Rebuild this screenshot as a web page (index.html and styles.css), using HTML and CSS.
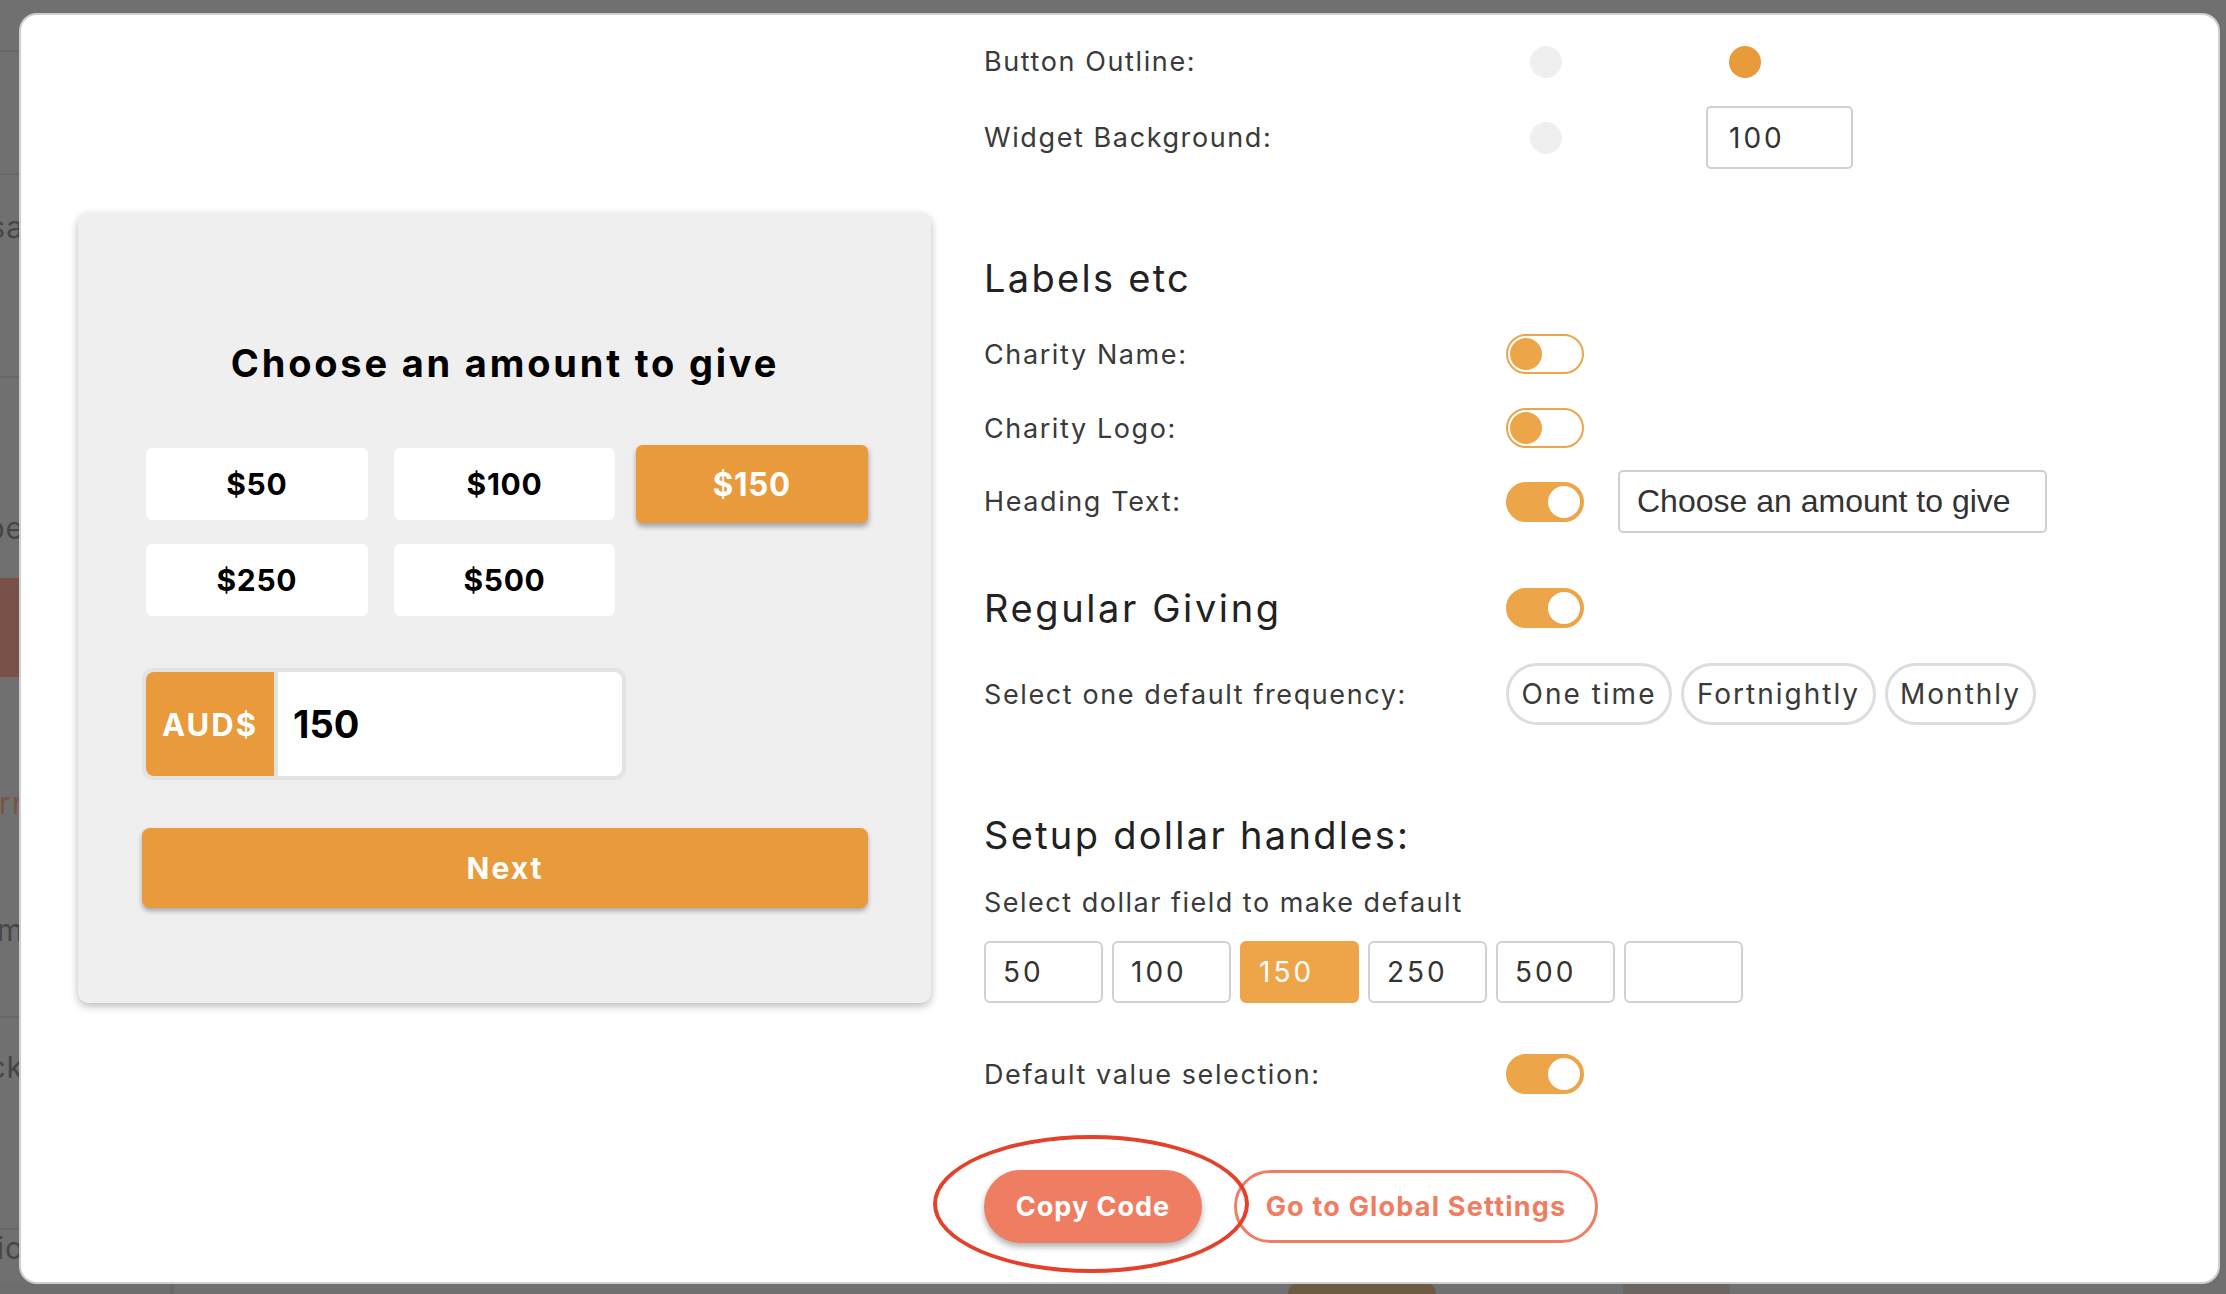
FILE: index.html
```html
<!DOCTYPE html>
<html lang="en">
<head>
<meta charset="utf-8">
<title>Widget settings</title>
<link rel="stylesheet" href="styles.css">
</head>
<body>
<div class="page">
  <div class="bg-rows">
    <div class="bg-row b1 line"></div>
    <div class="bg-row b2 line"></div>
    <div class="bg-row b3"><span class="bg-text">Usa</span></div>
    <div class="bg-row b4 line"></div>
    <div class="bg-row b5"></div>
    <div class="bg-row b6"><span class="bg-text">Type</span></div>
    <div class="bg-row b7 red"></div>
    <div class="bg-row b8"></div>
    <div class="bg-row b9"><span class="bg-text reddish">Corr</span></div>
    <div class="bg-row b10"></div>
    <div class="bg-row b11"><span class="bg-text">Em</span></div>
    <div class="bg-row b12 line"></div>
    <div class="bg-row b13"><span class="bg-text">Back</span></div>
    <div class="bg-row b14 line"></div>
    <div class="bg-row b15"><span class="bg-text">Optio</span></div>
  </div>
  <div class="bg-bottom">
    <div class="seg s1"></div>
    <div class="seg s2"></div>
    <div class="seg s3"></div>
    <div class="seg s4"></div>
    <div class="seg s5"></div>
    <div class="seg s6"></div>
  </div>
</div>

<div class="modal">
  <div class="preview-col">
    <div class="widget">
      <h2 class="widget-title">Choose an amount to give</h2>
      <div class="amounts">
        <button class="amt">$50</button>
        <button class="amt">$100</button>
        <button class="amt selected">$150</button>
        <button class="amt">$250</button>
        <button class="amt">$500</button>
      </div>
      <div class="custom-amt">
        <span class="cur">AUD$</span>
        <span class="val">150</span>
      </div>
      <button class="next">Next</button>
    </div>
  </div>

  <div class="settings-col">
    <div class="row r-color1">
      <span class="label">Button Outline:</span>
      <span class="dot gray"></span>
      <span class="dot orange"></span>
    </div>
    <div class="row r-color2">
      <span class="label">Widget Background:</span>
      <span class="dot gray"></span>
      <span class="num-input">100</span>
    </div>

    <h3 class="section-title t-labels">Labels etc</h3>

    <div class="row r-toggle r-charity-name">
      <span class="label">Charity Name:</span>
      <span class="toggle"><span class="knob"></span></span>
    </div>
    <div class="row r-toggle r-charity-logo">
      <span class="label">Charity Logo:</span>
      <span class="toggle"><span class="knob"></span></span>
    </div>
    <div class="row r-heading">
      <span class="label">Heading Text:</span>
      <span class="toggle on"><span class="knob"></span></span>
      <span class="text-input">Choose an amount to give</span>
    </div>

    <div class="row r-regular">
      <h3 class="section-title label">Regular Giving</h3>
      <span class="toggle on"><span class="knob"></span></span>
    </div>

    <div class="row r-freq">
      <span class="label">Select one default frequency:</span>
      <div class="pills">
        <span class="pill p1">One time</span>
        <span class="pill p2">Fortnightly</span>
        <span class="pill p3">Monthly</span>
      </div>
    </div>

    <h3 class="section-title t-setup">Setup dollar handles:</h3>
    <p class="hint">Select dollar field to make default</p>
    <div class="dollar-fields">
      <span class="dfield">50</span>
      <span class="dfield">100</span>
      <span class="dfield selected">150</span>
      <span class="dfield">250</span>
      <span class="dfield">500</span>
      <span class="dfield"></span>
    </div>

    <div class="row r-toggle r-default">
      <span class="label">Default value selection:</span>
      <span class="toggle on"><span class="knob"></span></span>
    </div>

    <div class="actions">
      <div class="copy-wrap">
        <button class="btn-copy">Copy Code</button>
        <span class="annotation"></span>
      </div>
      <button class="btn-global">Go to Global Settings</button>
    </div>
  </div>
</div>
</body>
</html>
```

FILE: styles.css
```css
* { box-sizing: border-box; }

html, body {
  margin: 0;
  padding: 0;
}

body {
  width: 2226px;
  height: 1294px;
  overflow: hidden;
  background: #707070;
  font-family: "Inter", "Liberation Sans", sans-serif;
  position: relative;
}

/* ---------- dimmed background page ---------- */
.page {
  display: flex;
  flex-direction: column;
  height: 1294px;
}

.bg-rows {
  display: flex;
  flex-direction: column;
  height: 1282px;
  overflow: hidden;
}

.bg-row {
  width: 21px;
  flex: none;
  display: flex;
  justify-content: flex-end;
  align-items: center;
  overflow: hidden;
}

.bg-row.line { border-bottom: 2px solid #686868; }

.bg-text {
  font-family: "Inter", sans-serif;
  font-size: 30px;
  letter-spacing: 1px;
  color: #464646;
  white-space: nowrap;
  margin-right: -3px;
}

.bg-text.reddish { color: #7d5048; }

.b1 { height: 52px; }
.b2 { height: 123px; }
.b3 { height: 104px; }
.b4 { height: 99px; }
.b5 { height: 100px; }
.b6 { height: 100px; }
.b7 { height: 99px; }
.red { background: #785248; }
.b8 { height: 76px; }
.b9 { height: 100px; }
.b10 { height: 27px; }
.b11 { height: 100px; }
.b12 { height: 38px; }
.b13 { height: 98px; }
.b14 { height: 114px; }
.b15 { height: 66px; align-items: flex-start; }

.bg-bottom {
  display: flex;
  height: 12px;
}

.seg { height: 12px; }
.s1 { width: 170px; background: #6e6e6e; }
.s2 { width: 1118px; background: #707070; border-left: 4px solid #676767; }
.s3 { width: 148px; background: #6d5a45; border-radius: 40px 40px 0 0; }
.s4 { width: 187px; background: #707070; }
.s5 { width: 107px; background: #6b6660; }
.s6 { flex: 1; background: #707070; }

/* ---------- modal ---------- */
.modal {
  position: absolute;
  left: 21px;
  top: 15px;
  width: 2197px;
  height: 1267px;
  background: #fff;
  border-radius: 16px;
  box-shadow: 0 0 0 2px #cfcfcf;
  display: flex;
  align-items: flex-start;
  padding-left: 57px;
}

/* ---------- widget preview ---------- */
.preview-col {
  margin-top: 198px;
  width: 853px;
  flex: none;
}

.widget {
  width: 853px;
  height: 790px;
  background: #efefef;
  border-radius: 10px;
  box-shadow: 0 3px 8px rgba(0, 0, 0, 0.28);
  padding: 0 63px 0 64px;
  display: flex;
  flex-direction: column;
}

.widget-title {
  margin: 126px 0 0;
  font-size: 38px;
  line-height: 48px;
  font-weight: 700;
  text-align: center;
  color: #000;
  letter-spacing: 2.8px;
}

.amounts {
  margin-top: 61px;
  padding: 0 5px 0 4px;
  display: grid;
  grid-template-columns: repeat(3, 1fr);
  column-gap: 26px;
  row-gap: 24px;
}

.amt {
  height: 72px;
  border: none;
  border-radius: 6px;
  background: #fff;
  font-family: inherit;
  font-size: 30px;
  font-weight: 700;
  letter-spacing: 0.7px;
  color: #000;
  padding: 0;
}

.amt.selected {
  background: #e99a3a;
  color: #fff;
  transform: scale(1.045, 1.08);
  box-shadow: 0 3px 5px rgba(0, 0, 0, 0.3);
}

.custom-amt {
  margin-top: 52px;
  width: 484px;
  height: 112px;
  background: #e3e3e3;
  border-radius: 10px;
  padding: 4px;
  display: flex;
  gap: 4px;
}

.cur {
  width: 128px;
  background: #e99a3a;
  border-radius: 8px 0 0 8px;
  color: #fff;
  font-size: 31px;
  font-weight: 700;
  letter-spacing: 2px;
  display: flex;
  align-items: center;
  justify-content: center;
}

.val {
  flex: 1;
  background: #fff;
  border-radius: 0 8px 8px 0;
  font-size: 38px;
  font-weight: 700;
  color: #000;
  display: flex;
  align-items: center;
  padding-left: 15px;
}

.next {
  margin-top: 48px;
  height: 80px;
  border: none;
  border-radius: 8px;
  background: #e99a3a;
  color: #fff;
  font-family: inherit;
  font-size: 30px;
  font-weight: 700;
  letter-spacing: 2px;
  box-shadow: 0 3px 5px rgba(0, 0, 0, 0.3);
}

/* ---------- settings column ---------- */
.settings-col {
  margin-left: 53px;
  padding-top: 15px;
  display: flex;
  flex-direction: column;
  color: #333;
}

.row {
  display: flex;
  align-items: center;
}

.label {
  width: 522px;
  flex: none;
  font-size: 27px;
  letter-spacing: 1.6px;
  color: #3a3a3a;
}

.r-color1 { height: 63px; }
.r-color2 { height: 63px; margin-top: 13px; }

.dot {
  width: 32px;
  height: 32px;
  border-radius: 50%;
  flex: none;
}

.dot.gray { background: #efefef; margin-left: 24px; }
.dot.orange { background: #e99a3a; margin-left: 167px; }

.num-input {
  margin-left: 144px;
  width: 147px;
  height: 63px;
  border: 2px solid #cfcfcf;
  border-radius: 5px;
  font-size: 28px;
  letter-spacing: 3px;
  color: #333;
  display: flex;
  align-items: center;
  padding-left: 21px;
}

.section-title {
  margin: 0;
  font-size: 38px;
  line-height: 48px;
  font-weight: 400;
  letter-spacing: 2.3px;
  color: #222;
}

.t-labels { margin-top: 85px; }

.r-toggle { height: 40px; }
.r-charity-name { margin-top: 32px; }
.r-charity-logo { margin-top: 34px; }

.toggle {
  width: 78px;
  height: 40px;
  border-radius: 20px;
  border: 2px solid #eda54a;
  background: #fff;
  display: flex;
  align-items: center;
  padding: 0 2px;
  flex: none;
}

.knob {
  width: 32px;
  height: 32px;
  border-radius: 50%;
  background: #eda54a;
}

.toggle.on {
  background: #eda54a;
  justify-content: flex-end;
}

.toggle.on .knob { background: #fff; }

.r-heading { height: 63px; margin-top: 22px; }

.text-input {
  margin-left: 34px;
  width: 429px;
  height: 63px;
  border: 2px solid #cfcfcf;
  border-radius: 5px;
  font-family: "Liberation Sans", Arial, sans-serif;
  font-size: 32px;
  color: #333;
  display: flex;
  align-items: center;
  padding-left: 17px;
  white-space: nowrap;
}

.r-regular { height: 48px; margin-top: 51px; }
.r-regular .label { font-size: 38px; letter-spacing: 2.6px; color: #222; }

.r-freq { height: 62px; margin-top: 31px; }

.pills {
  display: flex;
  gap: 9px;
}

.pill {
  height: 62px;
  border: 3px solid #dcdde1;
  border-radius: 31px;
  display: flex;
  align-items: center;
  justify-content: center;
  font-size: 28px;
  letter-spacing: 2px;
  color: #3a3a3a;
  white-space: nowrap;
}

.p1 { width: 166px; }
.p2 { width: 195px; }
.p3 { width: 151px; }

.t-setup { margin-top: 86px; }

.hint {
  margin: 27px 0 0;
  height: 34px;
  line-height: 34px;
  font-size: 27px;
  letter-spacing: 1.5px;
  color: #3a3a3a;
}

.dollar-fields {
  margin-top: 21px;
  display: flex;
  gap: 9px;
}

.dfield {
  width: 119px;
  height: 62px;
  border: 2px solid #d0d0d0;
  border-radius: 6px;
  display: flex;
  align-items: center;
  padding-left: 17px;
  font-size: 28px;
  letter-spacing: 3px;
  color: #333;
}

.dfield.selected {
  background: #eea549;
  border-color: #eea549;
  color: #fff;
}

.r-default { margin-top: 51px; }

.actions {
  margin-top: 76px;
  display: flex;
  align-items: center;
  gap: 32px;
}

.copy-wrap {
  position: relative;
}

.btn-copy {
  width: 218px;
  height: 73px;
  border: none;
  border-radius: 37px;
  background: #ef7d62;
  color: #fff;
  font-family: inherit;
  font-size: 27px;
  font-weight: 700;
  letter-spacing: 1px;
  box-shadow: 0 4px 6px rgba(0, 0, 0, 0.3);
  display: block;
}

.annotation {
  position: absolute;
  left: -51px;
  top: -35px;
  width: 316px;
  height: 138px;
  border: 4px solid #e5402a;
  border-radius: 50%;
  pointer-events: none;
}

.btn-global {
  width: 364px;
  height: 73px;
  border: 3px solid #ef7d62;
  border-radius: 37px;
  background: #fff;
  color: #ef7d62;
  font-family: inherit;
  font-size: 27px;
  font-weight: 700;
  letter-spacing: 1.2px;
}
```
